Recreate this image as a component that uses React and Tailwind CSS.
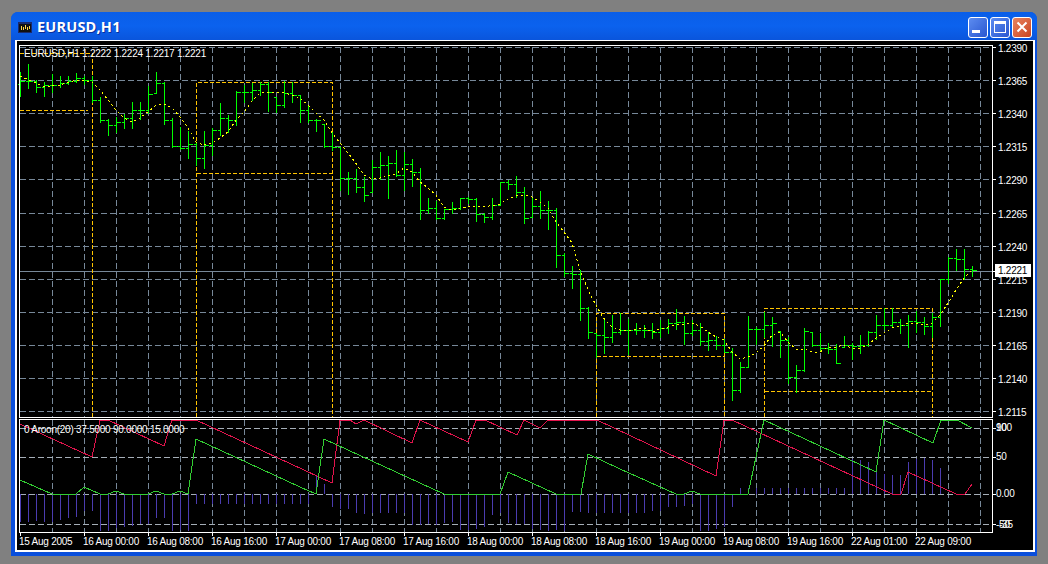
const B = [
[72,96,81],[64,88,81],[80,92,87],[82,96,85],[74,92,85],[76,87,83],[76,84,81],[73,82,78],[76,84,80],[76,102,100],
[97,122,120],[119,135,125],[117,132,122],[114,128,118],[102,128,110],[102,119,110],[86,113,94],[72,93,83],[82,124,120],[118,147,146],
[127,149,148],[131,158,144],[143,165,158],[131,168,145],[128,155,130],[103,135,118],[115,132,120],[91,125,92],[85,102,92],[83,100,90],
[82,95,84],[82,111,92],[97,112,105],[81,107,93],[82,102,95],[95,122,110],[105,122,120],[119,131,120],[124,147,146],[132,150,147],
[147,190,178],[172,194,178],[169,192,187],[177,201,195],[160,192,167],[152,179,165],[156,198,163],[150,176,175],[152,190,164],[159,186,172],
[168,219,210],[198,213,208],[201,219,218],[209,219,209],[202,213,208],[198,209,198],[197,203,199],[198,221,214],[213,222,217],[198,219,205],
[182,205,182],[180,189,184],[176,197,192],[187,223,218],[197,217,206],[191,218,210],[201,229,210],[208,267,255],[253,276,273],[266,288,274],
[270,320,308],[307,338,332],[333,357,335],[318,353,337],[315,342,332],[313,334,330],[319,354,330],[323,334,330],[325,337,330],[323,338,332],
[320,337,328],[319,333,323],[309,329,322],[316,344,333],[320,335,330],[323,345,341],[332,350,340],[336,349,345],[339,352,352],[348,400,390],
[362,392,367],[316,367,329],[327,344,329],[312,337,325],[317,346,323],[331,357,340],[337,383,377],[365,392,370],[328,371,331],[332,346,345],
[333,350,348],[343,353,349],[344,363,363],[336,347,345],[343,359,346],[335,353,345],[331,346,332],[315,339,325],[308,329,325],[308,326,322],
[319,333,325],[315,347,321],[311,332,322],[317,334,326],[313,337,317],[279,326,279],[257,283,258],[249,270,259],[249,279,269],[266,276,270],
];

const MA = "20,76 36,83 44,87 60,85 76,80 92,82 100,90 116,110 124,118 132,122 140,118 148,112 156,105 164,104 172,108 180,117 188,128 196,142 204,145 212,143 220,138 228,132 236,120 244,112 252,101 260,93 268,92 284,93 292,95 300,98 308,105 316,113 324,120 332,133 340,143 355,162 364,175 372,179 380,178 388,176 396,174 404,168 412,172 420,182 428,188 436,195 444,207 452,210 460,208 476,206 484,207 500,204 508,199 516,196 524,195 532,197 540,202 548,208 556,222 564,232 572,243 580,270 589,292 597,307 601,314 605,320 612,327 620,330 628,331 636,329 644,328 652,332 660,329 668,327 676,325 684,324 692,323 700,326 708,332 716,337 724,340 732,352 740,359 748,357 756,353 764,346 772,335 780,332 788,342 796,349 804,349 812,352 820,352 828,347 836,347 844,345 852,348 860,348 868,345 876,338 884,333 892,328 900,326 908,323 916,323 924,325 932,323 940,315 948,303 956,290 964,278 972,270";

const RED = "20,424 92,457 100,420 108,420 164,446 172,420 196,420 332,483 340,420 350,420 356,424 364,420 412,443 420,420 468,442 476,420 485,420 517,435 524,420 540,428 548,420 597,420 716,476 724,420 732,420 892,494 901,494 908,472 956,494 965,494 972,484";
const GREEN = "20,480 52,494 76,494 84,487 100,494 108,494 116,491 124,494 148,494 156,491 164,494 172,494 180,491 188,494 196,439 300,487 316,494 324,439 444,494 500,494 508,472 556,494 581,494 588,454 620,469 676,494 684,494 692,491 700,494 748,494 764,420 876,472 884,420 933,443 941,420 957,420 972,428";

const HIST = [522,522,521,522,522,520,518,517,511,511,531,531,528,527,526,524,524,518,518,531,530,531,504,504,504,504,504,504,504,504,504,504,504,504,504,504,504,475,484,507,509,509,513,514,513,513,513,513,513,525,525,524,525,523,522,530,530,529,527,515,513,523,524,524,529,530,531,530,531,512,512,513,513,513,513,513,513,513,513,511,511,507,507,506,504,531,531,529,527,507,
488,488,488,488,488,488,488,488,488,488,488,488,488,488,459,460,462,472,474,475,475,462,459,458,460,468];
const HX = (() => { const a = []; for (let i = 0; i < HIST.length; i++) a.push(i); return a; })();

const times = ["15 Aug 2005","16 Aug 00:00","16 Aug 08:00","16 Aug 16:00","17 Aug 00:00","17 Aug 08:00","17 Aug 16:00","18 Aug 00:00","18 Aug 08:00","18 Aug 16:00","19 Aug 00:00","19 Aug 08:00","19 Aug 16:00","22 Aug 01:00","22 Aug 09:00"];
const prices = [["1.2390",47.5],["1.2365",80.5],["1.2340",113.5],["1.2315",146.5],["1.2290",179.5],["1.2265",213.5],["1.2240",246.5],["1.2215",279.5],["1.2190",312.5],["1.2165",345.5],["1.2140",378.5],["1.2115",411.5]];
const vgrid = []; for (let x = 52.5; x < 990; x += 32) vgrid.push(x);
const hIndi = [428.5, 457.5, 494.5, 524.5];

const F = '"Liberation Sans", Arial, sans-serif';
const Y = "#ffc400";
const dash = (d) => <path d={d} stroke={Y} strokeDasharray="4 2" fill="none" />;

function Chart() {
  let bars = "";
  B.forEach(([h, l, c], i) => {
    const x = 20.5 + 8 * i;
    const o = i ? B[i - 1][2] : 84;
    const oy = Math.min(l, Math.max(h, o));
    bars += `M${x} ${h}V${l + 1}M${x - 3} ${oy + .5}H${x}M${x} ${c + .5}H${x + 4}`;
  });
  let hist = "";
  HX.forEach((i) => { const x = 20.5 + 8 * i; hist += `M${x} 494V${HIST[i]}`; });
  return (
    <svg width="1016" height="509" viewBox="17 41 1016 509" className="block bg-black" shapeRendering="crispEdges" style={{ fontFamily: F, fontSize: 10, letterSpacing: "-0.25px", whiteSpace: "pre" }}>
      <g stroke="#778899" strokeDasharray="6 3" fill="none">
        {vgrid.map((x) => <path key={x} d={`M${x} 47V417`} />)}
        {vgrid.map((x) => <path key={x} d={`M${x} 420V532`} />)}
        {prices.map(([, y]) => <path key={y} d={`M20 ${y}H992`} />)}
      </g>
      <g stroke="#a5aeb7" strokeDasharray="6 3" fill="none">
        {hIndi.map((y) => <path key={y} d={`M20 ${y}H992`} />)}
      </g>
      <path d="M20 271.5H992" stroke="#778899" />
      {dash("M20 53.5H92.5V417")}
      {dash("M20 110.5H88")}
      {dash("M196.5 417V82.5H332.5V417")}
      {dash("M196.5 173.5H332.5")}
      {dash("M596.5 417V313.5H724.5V417")}
      {dash("M596.5 356.5H724.5")}
      {dash("M764.5 417V308.5H932.5V417")}
      {dash("M764.5 391.5H932.5")}
      <path d={bars} stroke="#00ff00" fill="none" />
      <polyline points={MA} stroke="#ffff00" strokeDasharray="2 3" fill="none" />
      <path d={hist} stroke="#4b3cb0" fill="none" />
      <polyline points={RED} stroke="#e0144c" fill="none" />
      <polyline points={GREEN} stroke="#32cd32" fill="none" />
      <g stroke="#ffffff" fill="none">
        <path d="M19.5 45.5H992.5V417.5H19.5Z" />
        <path d="M19.5 419.5H992.5V532.5H19.5Z" />
        {prices.map(([, y]) => <path key={y} d={`M993 ${y}H996`} />)}
        {[428.5, 457.5, 494.5, 524.5].map((y) => <path key={y} d={`M993 ${y}H996`} />)}
        {times.map((t, i) => <path key={t} d={`M${20.5 + 64 * i} 533V536`} />)}
      </g>
      <g shapeRendering="auto" fill="#ffffff">
        <text x="24" y="57">EURUSD,H1  1.2222 1.2224 1.2217 1.2221</text>
        <text x="24" y="433">0 Aroon(20) 37.5000 90.0000 15.0000</text>
        {prices.map(([t, y]) => <text key={t} x="998" y={y + 4}>{t}</text>)}
        <text x="996" y="431">100</text>
        <text x="996" y="431">90</text>
        <text x="996" y="460">50</text>
        <text x="996" y="497">0.00</text>
        <text x="996" y="528">-50</text>
        <text x="999" y="528">-35</text>
        {times.map((t, i) => <text key={t} x={19 + 64 * i} y="545">{t}</text>)}
      </g>
      <rect x="995" y="264" width="36" height="13" fill="#ffffff" />
      <path d="M993 271.5H996" stroke="#ffffff" />
      <text x="998" y="274" fill="#000000" shapeRendering="auto">1.2221</text>
    </svg>
  );
}

function TitleIcon() {
  return (
    <svg width="14" height="11" viewBox="0 0 14 11" className="shrink-0" shapeRendering="crispEdges">
      <rect x="0" y="0" width="14" height="11" fill="#1a2a6c" />
      <rect x="1" y="2" width="12" height="8" fill="#111" />
      <path d="M3.5 4V8M5.5 5V8M7.5 3V7M9.5 5V8M11.5 4V7" stroke="#ffd84a" />
    </svg>
  );
}

function WinButton({ children, className }) {
  return (
    <div className={`w-[20px] h-[21px] rounded-[3px] border border-white flex items-center justify-center ${className}`}>
      {children}
    </div>
  );
}

export default function App() {
  return (
    <div className="w-[1048px] h-[564px] bg-[#808080] pl-[11px] pt-[12px] overflow-hidden">
      <div className="w-[1026px] h-[544px] rounded-t-[7px] bg-[#0a4fdc] flex flex-col">
        <div className="h-[28px] shrink-0 rounded-t-[7px] bg-gradient-to-b from-[#0a5ee8] via-[#0b62ee] to-[#0a55dc] flex items-center pl-[7px] pr-[5px] pt-[2px]">
          <TitleIcon />
          <span className="ml-[5px] text-white font-bold text-[14.5px] leading-none tracking-[0.2px] [text-shadow:1px_1px_0_#0a2f9c]" style={{ fontFamily: '"Open Sans", sans-serif' }}>EURUSD,H1</span>
          <div className="ml-auto flex gap-[2px]">
            <WinButton className="bg-gradient-to-br from-[#5d8cf0] to-[#2a56d0]">
              <div className="w-[8px] h-[3px] bg-white mt-[8px] mr-[4px]" />
            </WinButton>
            <WinButton className="bg-gradient-to-br from-[#5d8cf0] to-[#2a56d0]">
              <div className="w-[12px] h-[12px] border border-white border-t-[3px]" />
            </WinButton>
            <WinButton className="bg-gradient-to-br from-[#e8835f] to-[#c9431e]">
              <svg width="12" height="12" viewBox="0 0 12 12"><path d="M1.5 1.5L10.5 10.5M10.5 1.5L1.5 10.5" stroke="#fff" strokeWidth="2" /></svg>
            </WinButton>
          </div>
        </div>
        <div className="mx-[4px] border-2 border-white border-t-[1px] w-[1020px] box-border">
          <Chart />
        </div>
      </div>
    </div>
  );
}
